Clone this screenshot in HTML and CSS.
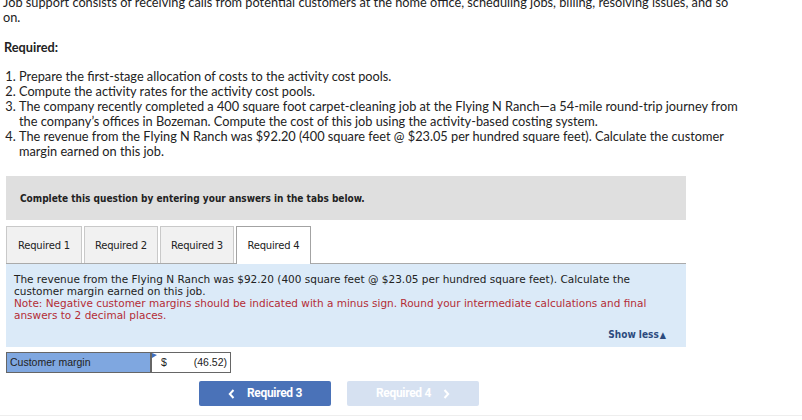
FILE: index.html
```html
<!DOCTYPE html>
<html>
<head>
<meta charset="utf-8">
<link rel="stylesheet" href="styles.css">
</head>
<body>
<div class="page">
  <p class="intro">Job support consists of receiving calls from potential customers at the home office, scheduling jobs, billing, resolving issues, and so on.</p>
  <p class="req-title">Required:</p>
  <ol class="req-list">
    <li>Prepare the first-stage allocation of costs to the activity cost pools.</li>
    <li>Compute the activity rates for the activity cost pools.</li>
    <li>The company recently completed a 400 square foot carpet-cleaning job at the Flying N Ranch—a 54-mile round-trip journey from the company’s offices in Bozeman. Compute the cost of this job using the activity-based costing system.</li>
    <li>The revenue from the Flying N Ranch was $92.20 (400 square feet @ $23.05 per hundred square feet). Calculate the customer margin earned on this job.</li>
  </ol>

  <div class="widget">
    <div class="instr">Complete this question by entering your answers in the tabs below.</div>
    <div class="tabs">
      <div class="tab t1">Required 1</div>
      <div class="tab t2">Required 2</div>
      <div class="tab t3">Required 3</div>
      <div class="tab t4 active">Required 4</div>
    </div>
    <div class="panel">
      <p class="q">The revenue from the Flying N Ranch was $92.20 (400 square feet @ $23.05 per hundred square feet). Calculate the customer margin earned on this job.</p>
      <p class="note">Note: Negative customer margins should be indicated with a minus sign. Round your intermediate calculations and final answers to 2 decimal places.</p>
      <div class="show-less">Show less<span class="tri">▲</span></div>
    </div>
    <div class="answer-row">
      <div class="label">Customer margin</div>
      <div class="input"><span class="flag"></span><span>$</span><span>(46.52)</span></div>
    </div>
    <div class="nav">
      <div class="btn prev"><svg class="chev chev-l" width="7" height="10" viewBox="0 0 7 10"><path d="M5.5 1 L1.8 5 L5.5 9" fill="none" stroke="#fff" stroke-width="2"/></svg>Required 3</div>
      <div class="btn next">Required 4<svg class="chev chev-r" width="7" height="10" viewBox="0 0 7 10"><path d="M1.5 1 L5.2 5 L1.5 9" fill="none" stroke="#fff" stroke-width="2"/></svg></div>
    </div>
  </div>
</div>
</body>
</html>
```

FILE: styles.css
```css
* { box-sizing: border-box; }
html, body { margin: 0; padding: 0; background: #fff; }
body { overflow: hidden; height: 420px; }
.page {
  margin-top: -5px;
  font-family: "Lato", "Liberation Sans", sans-serif;
  font-size: 12.75px;
  line-height: 15px;
  color: #222;
  border-bottom: 1px solid #eee;
  padding-bottom: 9px;
}
.intro { margin: 0 0 0 3px; width: 742px; }
.req-title { margin: 15px 0 0 4px; font-weight: bold; }
.req-list { margin: 14px 0 0 0; padding-left: 19px; width: 745px; }
.widget { margin: 17px 0 0 6px; width: 680px; }
.instr {
  background: #dfdfdf;
  height: 44px;
  display: flex;
  align-items: center;
  padding-left: 14px;
  font-family: "DejaVu Sans Condensed", "DejaVu Sans", sans-serif;
  font-stretch: condensed;
  font-size: 10px;
  font-weight: bold;
  color: #222;
}
.tabs {
  display: flex;
  margin-top: 6px;
  gap: 2px;
  border-bottom: 1px solid #aaa;
  font-family: "DejaVu Sans", Verdana, sans-serif;
  font-size: 10px;
}
.tab {
  height: 37px;
  display: flex;
  align-items: center;
  justify-content: center;
  background: #f1f1f1;
  border: 1px solid #c9c9c9;
  border-bottom: none;
  color: #222;
  letter-spacing: -0.2px;
}
.t1 { width: 76px; }
.t2 { width: 74px; }
.t3 { width: 74px; }
.t4 { width: 75px; }
.tab.active {
  background: #fff;
  border: 1px solid #a3a3a3;
  border-bottom: none;
  margin-bottom: -1px;
  height: 38px;
}
.panel {
  background: #dbeaf8;
  padding: 9px 8px 6px 8px;
  font-family: "DejaVu Sans", Verdana, sans-serif;
  font-size: 10.5px;
  line-height: 12px;
  color: #222;
}
.panel p { margin: 0; padding-right: 30px; }
.note { color: #b42d36; }
.show-less {
  margin-top: 8px;
  text-align: right;
  padding-right: 12px;
  font-weight: bold;
  color: #2c4a7d;
  font-family: "DejaVu Sans Condensed", "DejaVu Sans", sans-serif;
  font-stretch: condensed;
  font-size: 10px;
}
.tri { font-size: 9px; margin-left: 1px; }
.answer-row {
  display: flex;
  margin-top: 5px;
  height: 21px;
  font-family: "Liberation Sans", Arial, sans-serif;
  font-size: 10.5px;
  color: #222;
}
.label {
  width: 145px;
  background: #7fa7e0;
  border: 1px solid #666;
  display: flex;
  align-items: center;
  padding-left: 3px;
}
.input {
  position: relative;
  width: 80px;
  background: #fff;
  border: 1px solid #666;
  display: flex;
  align-items: center;
  justify-content: space-between;
  padding: 0 3px 0 9px;
}
.flag {
  position: absolute;
  left: 0;
  top: 0;
  width: 0; height: 0;
  border-left: 5px solid #3d6fc0;
  border-top: 2px solid transparent;
  border-bottom: 3px solid transparent;
}
.nav {
  display: flex;
  gap: 16px;
  margin: 8px 0 0 193px;
}
.btn {
  width: 132px;
  height: 25px;
  border-radius: 2px;
  display: flex;
  align-items: center;
  justify-content: center;
  font-family: "Roboto", "Liberation Sans", sans-serif;
  font-weight: bold;
  font-size: 12px;
  color: #fff;
  letter-spacing: -0.3px;
}
.btn.prev { background: #4a72b8; }
.btn.next { background: #d6e1f1; }
.chev { display: block; }
.chev-l { margin-right: 12px; }
.chev-r { margin-left: 12px; }
```
